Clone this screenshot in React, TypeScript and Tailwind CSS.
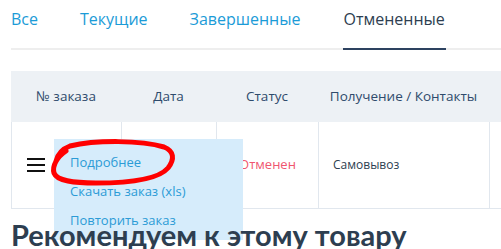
import React from 'react';

const tabs = ['Все', 'Текущие', 'Завершенные', 'Отмененные'];
const headers = ['№ заказа', 'Дата', 'Статус', 'Получение / Контакты', ''];

const Scribble: React.FC = () => (
    <svg
        className="absolute left-[46px] top-[137px] pointer-events-none"
        width="134"
        height="56"
        viewBox="0 0 134 56"
    >
        <path
            d="M10 24 C 12 16, 16 12, 24 9 C 50 3, 95 3, 118 10 C 128 14, 129 22, 122 31 C 112 43, 80 46, 50 46 C 28 46, 11 44, 8 36 C 6 29, 11 20, 20 14"
            fill="none"
            stroke="#ff0000"
            strokeWidth="5"
            strokeLinecap="round"
        />
    </svg>
);

const App: React.FC = () => {
    return (
        <div className="relative w-[501px] h-[249px] overflow-hidden bg-white font-['Open_Sans',sans-serif]">
            <div className="pl-[11px]">
                <div className="flex border-b-2 border-[#eeeeee] h-[50px]">
                    {tabs.map((t, i) => (
                        <div
                            key={t}
                            className={
                                i === 3
                                    ? 'ml-[42px] pt-[7px] px-[1px] text-[16px] text-[#2d3e50] border-b-2 border-[#2d4260] -mb-[2px]'
                                    : i === 0
                                    ? 'pt-[7px] text-[16px] text-[#1b9bd7]'
                                    : 'ml-[42px] pt-[7px] text-[16px] text-[#1b9bd7]'
                            }
                        >
                            {t}
                        </div>
                    ))}
                </div>

                <div className="mt-[21px]">
                    <div className="grid grid-cols-[110px_95px_102px_171px_1fr] h-[51px] bg-[#edf1f5] items-center text-[13.5px] text-[#2f4b6c]">
                        {headers.map((h, i) => (
                            <div key={i} className="text-center">{h}</div>
                        ))}
                    </div>
                    <div className="grid grid-cols-[110px_95px_102px_171px_1fr] h-[87px] border-l border-b border-[#e1e7ee] items-center">
                        <div className="h-full flex items-center pl-[15px] border-r border-[#e1e7ee]">
                            <svg width="18" height="14" viewBox="0 0 18 14">
                                <rect x="0" y="0" width="18" height="2" fill="#111" />
                                <rect x="0" y="6" width="18" height="2" fill="#111" />
                                <rect x="0" y="12" width="18" height="2" fill="#111" />
                            </svg>
                        </div>
                        <div className="h-full border-r border-[#e1e7ee]" />
                        <div className="h-full flex items-center justify-center border-r border-[#e1e7ee] text-[13px] text-[#f0566f]">
                            Отменен
                        </div>
                        <div className="h-full flex items-center pl-[14px] border-r border-[#e1e7ee] text-[12px] text-[#2d3e50]">
                            Самовывоз
                        </div>
                        <div className="h-full" />
                    </div>
                </div>
            </div>

            <div className="absolute left-[54px] top-[139px] w-[189px] h-[101px] bg-[#d6ecfb] text-[13px] text-[#2b9bd6] pl-[16px] pt-[14px] flex flex-col gap-[10px]">
                <div className="leading-[19px]">Подробнее</div>
                <div className="leading-[19px]">Скачать заказ (xls)</div>
                <div className="leading-[19px]">Повторить заказ</div>
            </div>

            <h2 className="relative pl-[11px] mt-[8px] text-[29px] leading-[36px] font-bold text-[#2d3e50] whitespace-nowrap font-['Lato',sans-serif]">
                Рекомендуем к этому товару
            </h2>

            <Scribble />
        </div>
    );
};

export default App;
